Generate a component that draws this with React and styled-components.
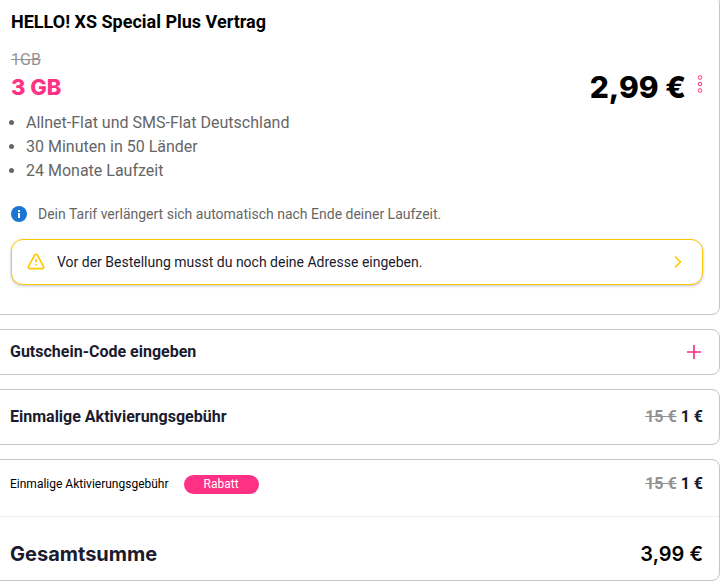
import styled, { createGlobalStyle } from "styled-components";

const App = () => {
  return (
    <>
      <GlobalStyle />
      <Summary>
        <TariffCard>
          <Title>HELLO! XS Special Plus Vertrag</Title>
          <Offer>
            <div>
              <OldVolume>1GB</OldVolume>
              <Volume>3 GB</Volume>
            </div>
            <PriceGroup>
              <Price>2,99 €</Price>
              <MenuButton type="button" aria-label="Optionen">
                <svg width="6" height="24" viewBox="0 -2 6 24" fill="none" stroke="#ff3185">
                  <circle cx="3" cy="3.5" r="1.8" />
                  <circle cx="3" cy="10" r="1.8" />
                  <circle cx="3" cy="16.5" r="1.8" />
                </svg>
              </MenuButton>
            </PriceGroup>
          </Offer>
          <Features>
            <li>Allnet-Flat und SMS-Flat Deutschland</li>
            <li>30 Minuten in 50 Länder</li>
            <li>24 Monate Laufzeit</li>
          </Features>
          <Hint>
            <svg width="16" height="16" viewBox="0 0 16 16">
              <circle cx="8" cy="8" r="8" fill="#1976d2" />
              <path d="M7 4h2v2H7zM7 7h2v5H7z" fill="#fff" />
            </svg>
            Dein Tarif verlängert sich automatisch nach Ende deiner Laufzeit.
          </Hint>
          <AddressButton type="button">
            <svg width="18" height="18" viewBox="0 0 18 18" fill="none" stroke="#ffc800">
              <path
                d="M7.6 2.2a1.6 1.6 0 0 1 2.8 0l6 11.1a1.5 1.5 0 0 1-1.3 2.3H2.9a1.5 1.5 0 0 1-1.3-2.3z"
                strokeWidth="1.7"
                strokeLinejoin="round"
              />
              <path d="M9 6v3.5M9 11v1.6" strokeWidth="1.5" />
            </svg>
            <span>Vor der Bestellung musst du noch deine Adresse eingeben.</span>
            <svg width="8" height="14" viewBox="0 0 8 14" fill="none" stroke="#ffc800" strokeWidth="1.7">
              <path d="M1 1.5L6.5 7L1 12.5" />
            </svg>
          </AddressButton>
        </TariffCard>

        <VoucherButton type="button">
          Gutschein-Code eingeben
          <svg width="14" height="14" viewBox="0 0 14 14" stroke="#ff3185" strokeWidth="1.7">
            <path d="M7 0v14M0 7h14" />
          </svg>
        </VoucherButton>

        <FeeCard>
          <span>Einmalige Aktivierungsgebühr</span>
          <Fee>
            <s>15 €</s> 1 €
          </Fee>
        </FeeCard>

        <TotalCard>
          <DiscountRow>
            <DiscountLabel>
              Einmalige Aktivierungsgebühr
              <Badge>Rabatt</Badge>
            </DiscountLabel>
            <Fee>
              <s>15 €</s> 1 €
            </Fee>
          </DiscountRow>
          <TotalRow>
            <h2>Gesamtsumme</h2>
            <Total>3,99 €</Total>
          </TotalRow>
        </TotalCard>
      </Summary>
    </>
  );
};

const GlobalStyle = createGlobalStyle`
  * {
    box-sizing: border-box;
  }

  body {
    margin: 0;
    background: #fff;
    color: #1a1b2e;
    font-family: Roboto, sans-serif;
    font-size: 16px;
    line-height: 24px;
    overflow: hidden;
  }

  h1, h2, p, ul {
    margin: 0;
    padding: 0;
  }

  button {
    font: inherit;
    color: inherit;
    background: #fff;
    text-align: left;
    cursor: pointer;
  }

  svg {
    flex-shrink: 0;
  }
`;

const Summary = styled.main`
  display: flex;
  flex-direction: column;
  gap: 14px;
  margin: -5px 4px 0 -7px;
`;

const Card = styled.section`
  border: 1px solid #c6c6c6;
  border-radius: 8px;
  background: #fff;
`;

const TariffCard = styled(Card)`
  padding: 14px 16px 29px 17px;
`;

const Title = styled.h1`
  color: #000;
  font-size: 18px;
  font-weight: 700;
`;

const Offer = styled.div`
  display: flex;
  align-items: flex-end;
  justify-content: space-between;
  margin-top: 14px;
`;

const OldVolume = styled.s`
  display: block;
  color: #929292;
`;

const Volume = styled.p`
  color: #ff3185;
  font-family: Inter, sans-serif;
  font-size: 22px;
  font-weight: 800;
  line-height: 30px;
`;

const PriceGroup = styled.div`
  display: flex;
  align-items: flex-start;
  gap: 11px;
`;

const Price = styled.strong`
  color: #000;
  font-family: Inter, sans-serif;
  font-size: 30px;
  font-weight: 800;
  line-height: 30px;
`;

const MenuButton = styled.button`
  display: flex;
  padding: 0;
  border: 0;
`;

const Features = styled.ul`
  margin-top: 9px;
  padding-left: 15px;
  color: #666;
`;

const Hint = styled.p`
  display: flex;
  align-items: center;
  gap: 11px;
  margin-top: 19px;
  color: #666;
  font-size: 14px;
`;

const AddressButton = styled.button`
  display: flex;
  align-items: center;
  gap: 12px;
  width: 100%;
  height: 46px;
  margin-top: 13px;
  padding: 0 20px 0 15px;
  border: 1px solid #ffc800;
  border-radius: 12px;
  box-shadow: 0 1px 3px rgba(0, 0, 0, 0.25);
  font-size: 14px;

  span {
    flex: 1;
  }
`;

const VoucherButton = styled.button`
  display: flex;
  align-items: center;
  justify-content: space-between;
  padding: 10px 18px 10px 16px;
  border: 1px solid #c6c6c6;
  border-radius: 8px;
  font-weight: 700;
`;

const FeeCard = styled(Card)`
  display: flex;
  justify-content: space-between;
  padding: 15px 16px;
  font-weight: 700;
`;

const Fee = styled.span`
  font-weight: 700;

  s {
    color: #929292;
  }
`;

const TotalCard = styled(Card)`
  color: #1a1b2e;
`;

const DiscountRow = styled.div`
  display: flex;
  align-items: center;
  justify-content: space-between;
  padding: 12px 16px 20px;
  border-bottom: 1px solid #eeeef2;
`;

const DiscountLabel = styled.span`
  display: flex;
  align-items: center;
  gap: 15px;
  color: #000;
  font-size: 12px;
`;

const Badge = styled.span`
  padding: 0 20px;
  border-radius: 10px;
  background: #ff3185;
  color: #fff;
  line-height: 19px;
`;

const TotalRow = styled.div`
  display: flex;
  align-items: center;
  justify-content: space-between;
  padding: 21px 16px 10px;
  font-family: Inter, sans-serif;
  line-height: 32px;

  h2 {
    font-size: 20px;
    font-weight: 700;
  }
`;

const Total = styled.strong`
  color: #000;
  font-size: 20px;
  font-weight: 600;
`;

export default App;
